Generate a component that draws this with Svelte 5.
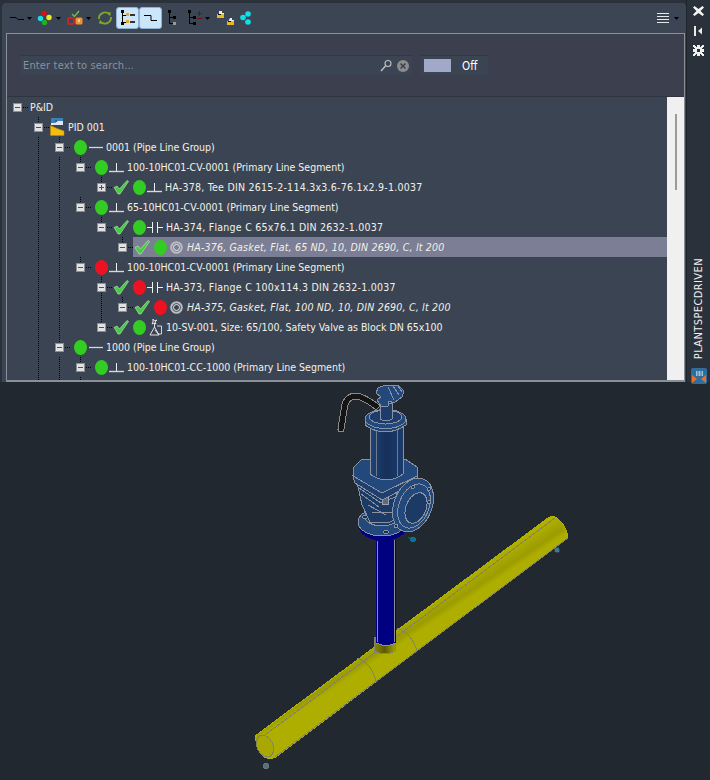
<script>
	// lines = indent columns that carry a dotted guide, up/down = guide through the expander
	const rows = [
		{ level: 0, text: 'P&ID', exp: 'minus', down: false },
		{ level: 1, lines: [], text: 'PID 001', exp: 'minus', kind: 'file' },
		{ level: 2, lines: [1], text: '0001 (Pipe Line Group)', exp: 'minus', status: 'green', kind: 'line' },
		{ level: 3, lines: [1, 2], text: '100-10HC01-CV-0001 (Primary Line Segment)', exp: 'minus', status: 'green', kind: 'tee' },
		{ level: 4, lines: [1, 2], up: true, text: 'HA-378, Tee DIN 2615-2-114.3x3.6-76.1x2.9-1.0037', exp: 'plus', check: true, status: 'green', kind: 'tee', wide: true },
		{ level: 3, lines: [1, 2], text: '65-10HC01-CV-0001 (Primary Line Segment)', exp: 'minus', status: 'green', kind: 'tee' },
		{ level: 4, lines: [1, 2], up: true, text: 'HA-374, Flange C 65x76.1 DIN 2632-1.0037', exp: 'minus', check: true, status: 'green', kind: 'flange', wide: true },
		{ level: 5, lines: [1, 2], up: true, text: 'HA-376, Gasket, Flat, 65 ND, 10, DIN 2690, C, lt 200', exp: 'minus', check: true, status: 'green', kind: 'gasket', italic: true, selected: true },
		{ level: 3, lines: [1, 2], text: '100-10HC01-CV-0001 (Primary Line Segment)', exp: 'minus', status: 'red', kind: 'tee' },
		{ level: 4, lines: [1, 2], up: true, down: true, text: 'HA-373, Flange C 100x114.3 DIN 2632-1.0037', exp: 'minus', check: true, status: 'red', kind: 'flange', wide: true },
		{ level: 5, lines: [1, 2, 4], up: true, text: 'HA-375, Gasket, Flat, 100 ND, 10, DIN 2690, C, lt 200', exp: 'minus', check: true, status: 'red', kind: 'gasket', italic: true },
		{ level: 4, lines: [1, 2], up: true, text: '10-SV-001, Size: 65/100, Safety Valve as Block DN 65x100', exp: 'minus', check: true, status: 'green', kind: 'valve' },
		{ level: 2, lines: [1], up: true, text: '1000 (Pipe Line Group)', exp: 'minus', status: 'green', kind: 'line' },
		{ level: 3, lines: [1, 2], text: '100-10HC01-CC-1000 (Primary Line Segment)', exp: 'minus', status: 'green', kind: 'tee' },
		{ level: 4, lines: [1, 2, 3], text: '', status: 'green', clipped: true }
	];

	function columns(row) {
		return Array.from({ length: row.level }, (_, i) => (row.lines ?? []).includes(i));
	}
</script>

{#snippet caret()}
	<svg class="caret" width="5" height="3" viewBox="0 0 5 3"><path d="M0 0h5L2.5 3z" fill="#000" /></svg>
{/snippet}

{#snippet kindIcon(kind)}
	{#if kind === 'file'}
		<svg width="15" height="18" viewBox="0 0 15 18" class="kind">
			<path d="M1 0h12v7H1z" fill="#3f7fb8" />
			<path d="M1 5h4l3-2h5v4H1z" fill="#dfe8f0" />
			<path d="M5 2h2v2H5z" fill="#2a5f90" />
			<path d="M.5 7.500L7 10.500l7 2.500v4.500H.5z" fill="#f2bd10" stroke="#b98a00" stroke-width=".6" />
		</svg>
	{:else if kind === 'line'}
		<svg width="15" height="9" viewBox="0 0 15 9" class="kind"><path d="M1 4.500h14" stroke="#d8d8d8" stroke-width="1.300" /></svg>
	{:else if kind === 'tee'}
		<svg width="15" height="11" viewBox="0 0 15 11" class="kind">
			<path d="M0 9.500h15" stroke="#d8d8d8" stroke-width="1.400" /><path d="M7.500 1v8" stroke="#f0f0f0" />
		</svg>
	{:else if kind === 'flange'}
		<svg width="16" height="13" viewBox="0 0 16 13" class="kind">
			<path d="M0 6.500h5M11 6.500h5M5.500 1v11M10.500 1v11" stroke="#f0f0f0" fill="none" />
		</svg>
	{:else if kind === 'gasket'}
		<svg width="13" height="13" viewBox="0 0 13 13" class="kind gasket">
			<circle cx="6.500" cy="6.500" r="5.300" fill="none" stroke="#bcbcbc" stroke-width="2" />
			<circle cx="6.500" cy="6.500" r="3" fill="none" stroke="#ececec" />
		</svg>
	{:else if kind === 'valve'}
		<svg width="14" height="17" viewBox="0 0 14 17" class="kind valve">
			<path d="M4 0l1.500 2L8 1 6 3l1 2-2-1-2 1 1-2zM5.500 4v4M1 16l4.500-8 4.500 8zM6 11l4 5" stroke="#f0f0f0" stroke-width=".9" fill="none" />
			<path d="M8 7h4.500v8H10" stroke="#d8d8d8" fill="none" />
		</svg>
	{/if}
{/snippet}

<div class="app">
	<section class="palette">
		<div class="main">
			<div class="toolbar">
				<button class="tool w24">
					<svg width="14" height="7" viewBox="0 0 14 7"><path d="M0 2.500h6l2 2h6" stroke="#000" fill="none" /></svg>
					{@render caret()}
				</button>
				<button class="tool w30">
					<svg width="16" height="16" viewBox="0 0 16 16">
						<circle cx="7" cy="3.500" r="2.700" fill="#e01010" /><circle cx="3.500" cy="8.500" r="2.700" fill="#10e0e8" />
						<circle cx="12" cy="7.500" r="2.700" fill="#f0e818" /><circle cx="7.500" cy="12.500" r="2.700" fill="#20b020" />
					</svg>
					{@render caret()}
				</button>
				<button class="tool w30">
					<svg width="16" height="16" viewBox="0 0 16 16">
						<path d="M5 4l2.500 2.500L12 1" stroke="#6cc04a" stroke-width="1.400" fill="none" />
						<rect x="1" y="8" width="6" height="6" rx="1" fill="#3c4654" stroke="#e02020" stroke-width="1.600" />
						<rect x="8.500" y="7.500" width="7" height="7" rx="1.500" fill="#f09030" /><path d="M12 9v3" stroke="#fff" />
					</svg>
					{@render caret()}
				</button>
				<button class="tool refresh">
					<svg width="16" height="16" viewBox="0 0 16 16">
						<path d="M2 9a6 6 0 0 1 10-5M14 7a6 6 0 0 1-10 5" stroke="#7ea82a" stroke-width="1.800" fill="none" />
						<path d="M10 2l4 .5-1 4zM6 14l-4-.5 1-4z" fill="#7ea82a" />
					</svg>
				</button>
				<button class="tool pressed">
					<svg width="16" height="16" viewBox="0 0 16 16">
						<path d="M1 0h3v3H1zM1 12h3v3H1z" fill="#000" /><path d="M2.500 3v10M2.500 5.500H7M2.500 12.500H7" stroke="#000" fill="none" />
						<path d="M6 3h3v3H6zM6 10h3v3H6z" fill="#e8a820" /><path d="M10 4h5v2h-5zM10 11h5v2h-5z" fill="#333" />
					</svg>
				</button>
				<button class="tool pressed next">
					<svg width="14" height="7" viewBox="0 0 14 7"><path d="M0 .5h7v5h6" stroke="#000" fill="none" /></svg>
				</button>
				<button class="tool tree3">
					<svg width="9" height="16" viewBox="0 0 9 16">
						<path d="M0 0h3v3H0z" fill="#000" /><path d="M1.500 3v11M1.500 7.500H5M1.500 13.500H5" stroke="#000" fill="none" />
						<path d="M5 6h3v3H5z" fill="#000" /><path d="M5 12h3v3H5z" fill="#999" />
					</svg>
				</button>
				<button class="tool tree4">
					<svg width="14" height="16" viewBox="0 0 14 16">
						<path d="M0 0h3v3H0z" fill="#000" /><path d="M1.500 3v11M1.500 7.500H5M1.500 13.500H5" stroke="#000" fill="none" />
						<path d="M5 6h3v3H5zM5 12h3v3H5z" fill="#000" />
						<path d="M9 3.500h5M11.500 1v5M9 8.500h5" stroke="#7a0c0c" fill="none" />
					</svg>
					{@render caret()}
				</button>
				<button class="tool pair">
					<svg width="17" height="14" viewBox="0 0 17 14">
						<path d="M2 0h3v2h2v2H2z" fill="#e8eef4" /><path d="M0 3h7v4H0z" fill="#e8b820" /><path d="M1 3h3v1H1z" fill="#111" />
						<path d="M8 6l2 2" stroke="#1e4f90" />
						<path d="M13 7h2v2h2v2h-6z" fill="#e8eef4" /><path d="M10 10h7v4h-7z" fill="#e8b820" /><path d="M11 10h3v1h-3z" fill="#111" />
					</svg>
				</button>
				<button class="tool dots">
					<svg width="12" height="14" viewBox="0 0 12 14">
						<circle cx="8" cy="3" r="2.800" fill="#10e0e8" /><circle cx="3" cy="6.500" r="2.800" fill="#10e0e8" /><circle cx="8" cy="11" r="2.800" fill="#10e0e8" />
					</svg>
				</button>
				<button class="tool menu">
					<svg width="12" height="10" viewBox="0 0 12 10"><path d="M0 .5h12M0 3.500h12M0 6.500h12M0 9.500h12" stroke="#e8e8e8" fill="none" /></svg>
					{@render caret()}
				</button>
			</div>

			<div class="box">
				<div class="search-area">
					<div class="search">
						<span class="placeholder">Enter text to search...</span>
						<svg width="12" height="13" viewBox="0 0 12 13">
							<circle cx="8" cy="4.500" r="3" fill="none" stroke="#c0c0c0" stroke-width="1.100" /><path d="M5.500 7L1 12" stroke="#c0c0c0" stroke-width="1.400" />
						</svg>
						<svg class="clear" width="12" height="12" viewBox="0 0 12 12">
							<circle cx="6" cy="6" r="6" fill="#8c8c8c" /><path d="M3.500 3.500l5 5M8.500 3.500l-5 5" stroke="#3c3f4e" stroke-width="1.500" />
						</svg>
					</div>
					<div class="toggle"><span class="swatch"></span><span class="off">Off</span></div>
				</div>

				<div class="tree-area">
					<div class="tree">
						{#each rows as row}
							<div class="row">
								{#each columns(row) as hasLine}
									<span class="col" class:line={hasLine}></span>
								{/each}
								<span class="col" class:up={row.up || row.level > 0} class:down={row.down} class:branch={row.exp}>
									{#if row.exp}
										<span class="exp"><i class="bar"></i>{#if row.exp === 'plus'}<i class="stem"></i>{/if}</span>
									{/if}
								</span>
								<div class="content" class:selected={row.selected}>
									{#if row.check}
										<svg class="check" width="16" height="16" viewBox="0 0 16 16">
											<path d="M1 8.500L4 7l2.500 3L14 1.500l1.500 1L7 15H5z" fill="#44cc44" stroke="#c4f0b4" stroke-width=".6" />
										</svg>
									{/if}
									{#if row.status}<span class="dot {row.status}" class:clipped={row.clipped}></span>{/if}
									{#if row.kind}{@render kindIcon(row.kind)}{/if}
									<span class="label" class:italic={row.italic} class:wide={row.wide} class:top={row.level === 0}>{row.text}</span>
								</div>
							</div>
						{/each}
					</div>
					<div class="scrollbar"><span class="thumb"></span></div>
				</div>
			</div>
		</div>

		<aside class="rail">
			<svg class="rail-icon" width="11" height="10" viewBox="0 0 11 10"><path d="M0 1.500L1.500 0l4 3 4-3L11 1.500 7.500 5 11 8.500 9.500 10l-4-3-4 3L0 8.500 3.500 5z" fill="#f4f4f4" /></svg>
			<svg class="rail-icon pin" width="9" height="10" viewBox="0 0 9 10"><path d="M0 0h2v10H0z" fill="#e8e8e8" /><path d="M8 1.500v7L4 5z" fill="#e8e8e8" /></svg>
			<svg class="rail-icon gear" width="11" height="11" viewBox="0 0 11 11">
				<path d="M0 0h2v1h1v1h1V0h3v2h1V1h1V0h2v2h-1v1H9v1h2v3H9v1h1v1h1v2H9v-1H8V9H7v2H4V9H3v1H2v1H0V9h1V8h1V7H0V4h2V3H1V2H0z" fill="#f0f0f0" />
				<path d="M4 4h3v3H4z" fill="#2b313b" />
			</svg>
			<span class="rail-title">PLANTSPECDRIVEN</span>
			<svg class="rail-logo" width="16" height="16" viewBox="0 0 16 16">
				<rect width="16" height="16" rx="2" fill="#2f6d9c" />
				<path d="M5 3h7v5H5z" fill="#a8c0d4" /><path d="M7 3v5M10 3v5" stroke="#2f6d9c" />
				<path d="M1 7l5 4-5 4zM15 7l-5 4 5 4z" fill="#e8702a" />
			</svg>
		</aside>
	</section>

	<svg class="scene" width="710" height="398" viewBox="0 382 710 398" shape-rendering="crispEdges">
		<defs>
			<linearGradient id="pipe" gradientUnits="userSpaceOnUse" x1="400" y1="610" x2="416" y2="634">
				<stop offset="0" stop-color="#b8b800" />
				<stop offset=".45" stop-color="#aaaa00" />
				<stop offset=".8" stop-color="#9c9c00" />
				<stop offset="1" stop-color="#aeae00" />
			</linearGradient>
			<linearGradient id="bonnet" x1="0" x2="1" y1="0" y2="0">
				<stop offset="0" stop-color="#1f4478" />
				<stop offset=".5" stop-color="#16305a" />
				<stop offset="1" stop-color="#1c3c6c" />
			</linearGradient>
			<linearGradient id="cup" x1="0" x2="1" y1="0" y2="0">
				<stop offset="0" stop-color="#8c8c00" />
				<stop offset=".5" stop-color="#5a5a00" />
				<stop offset="1" stop-color="#a0a000" />
			</linearGradient>
		</defs>

		<!-- pipe run -->
		<path d="M255 736L548 518Q553 515 557 518Q566 525 568 537L276 757Q270 760 264 757Q257 748 255 736z" fill="url(#pipe)" stroke="#b0b000" stroke-width="1" />
		<path d="M265 735L555 518" stroke="#85855a" fill="none" />
		<path d="M275 757L568 538" stroke="#85855a" fill="none" />
		<ellipse cx="265" cy="746" rx="8" ry="11.500" transform="rotate(-25 265 746)" fill="#a8a800" stroke="#85855a" />
		<path d="M357 658Q372 663 376 682" stroke="#85855a" fill="none" />
		<path d="M397 628Q413 634 417 652" stroke="#85855a" fill="none" />
		<circle cx="376" cy="681" r=".6" fill="#fff" /><circle cx="417" cy="651" r=".6" fill="#fff" />

		<!-- stem into the tee -->
		<path d="M374 637h21v14q-10 6-21 0z" fill="url(#cup)" stroke="#85856a" />
		<path d="M376 540h20v103q-10 6-20 0z" fill="#000080" />
		<path d="M377 540v102M394 540v102M376 643q10 5 20 0" stroke="#8a8fa0" fill="none" />

		<!-- safety valve: lower flange and body -->
		<ellipse cx="383" cy="526" rx="24" ry="15" fill="#000080" />
		<ellipse cx="382" cy="522" rx="24" ry="14" fill="#23487c" stroke="#8a92a0" />
		<ellipse cx="382" cy="517" rx="17" ry="9" fill="#1c3a66" stroke="#8a92a0" />
		<ellipse cx="365" cy="517" rx="2.500" ry="1.500" fill="#16305a" stroke="#8a92a0" />
		<ellipse cx="386" cy="532" rx="2.500" ry="1.500" fill="#16305a" stroke="#8a92a0" />
		<path d="M357 482L382 499L404 490V516L390 522H370L362 505z" fill="#1c3a66" stroke="#8a92a0" />
		<path d="M359 488L381 503L402 494M361 494L379 507M372 512L394 512M368 505L386 515" stroke="#8a92a0" fill="none" />
		<path d="M382 497h6v7h-6z" fill="#5a6a80" stroke="#9aa2b0" />
		<circle cx="362" cy="490" r=".6" fill="#fff" /><circle cx="366" cy="496" r=".6" fill="#fff" /><circle cx="372" cy="501" r=".6" fill="#fff" />

		<!-- base plate -->
		<path d="M353 476L382 493L417 476V482L382 500L355 483z" fill="#1e3f70" stroke="#8a92a0" />
		<path d="M353 468L362 459H405L417 467V476L382 493L353 476z" fill="#23487c" stroke="#8a92a0" />

		<!-- bonnet -->
		<path d="M370 424h33v50q-16 12-33 0z" fill="url(#bonnet)" stroke="#8a92a0" />
		<path d="M376 430v46M397 430v46" stroke="#6f7a8c" fill="none" />
		<path d="M365 419v6q20 14 41 0v-6z" fill="#1f4478" stroke="#8a92a0" />
		<ellipse cx="385.500" cy="419" rx="20.500" ry="9.500" fill="#23487c" stroke="#8a92a0" />
		<ellipse cx="385.500" cy="417" rx="16" ry="7" fill="#1c3c6c" stroke="#8a92a0" />

		<!-- side flange -->
		<ellipse cx="413" cy="505" rx="19" ry="28" transform="rotate(22 413 505)" fill="#23487c" stroke="#8a92a0" />
		<ellipse cx="414" cy="506" rx="15" ry="23" transform="rotate(22 414 506)" fill="none" stroke="#8a92a0" />
		<ellipse cx="416" cy="508" rx="10" ry="16" transform="rotate(22 416 508)" fill="#1c3a66" stroke="#8a92a0" />
		<circle cx="413" cy="487" r="1.500" fill="#16305a" stroke="#8a92a0" />
		<circle cx="429" cy="489" r="1.500" fill="#16305a" stroke="#8a92a0" />
		<circle cx="429" cy="502" r="1.500" fill="#16305a" stroke="#8a92a0" />
		<circle cx="396" cy="526" r="1.500" fill="#16305a" stroke="#8a92a0" />
		<circle cx="412" cy="497" r=".6" fill="#fff" /><circle cx="404" cy="495" r=".6" fill="#fff" />

		<!-- cap and lever -->
		<path d="M380 403h12v16q-6 4-12 0z" fill="#1c3c6c" stroke="#8a92a0" />
		<path d="M378 388l7-3 13 0 6 6-2 6-8 6-5-2-1 5-7 0-4-6 4-3-5-4z" fill="#23487c" stroke="#8a92a0" />
		<path d="M388 387l6 13M393 386l6 9M398 386l4 6" stroke="#8a92a0" fill="none" />
		<circle cx="380" cy="400" r=".6" fill="#fff" /><circle cx="393" cy="413" r=".6" fill="#fff" /><circle cx="378" cy="418" r=".6" fill="#fff" />

		<!-- vent pipe -->
		<path d="M341 429Q343 416 345 404Q348 396 356 396Q364 397 376 406" fill="none" stroke="#8a8a8a" stroke-width="7" stroke-linecap="round" />
		<path d="M341 429Q343 416 345 404Q348 396 356 396Q364 397 376 406" fill="none" stroke="#141414" stroke-width="5" stroke-linecap="round" />

		<!-- port markers -->
		<path d="M408 537l4 3" stroke="#a02020" />
		<circle cx="413" cy="539.500" r="3" fill="#0c6f96" />
		<circle cx="557" cy="550" r="2.500" fill="#3a7f96" stroke="#556" stroke-width=".5" />
		<circle cx="266" cy="766" r="3" fill="#5a7078" stroke="#777" stroke-width=".5" />
	</svg>
</div>

<style>
	:global(body) {
		margin: 0;
		background: #212830;
	}

	.app {
		width: 710px;
		height: 780px;
		overflow: hidden;
		display: flex;
		flex-direction: column;
		background: #212830;
		font-family: "DejaVu Sans", "Liberation Sans", sans-serif;
		font-stretch: condensed;
		font-size: 10.500px;
		color: #f2f2ea;
	}

	.palette {
		height: 382px;
		flex: none;
		display: flex;
		background: #2b313b;
	}

	.main {
		width: 684px;
		margin: 3px 0 0 2px;
		padding: 0 1px 0 4px;
		box-sizing: border-box;
		display: flex;
		flex-direction: column;
		background: #3b4554;
		border-radius: 4px 4px 0 0;
	}

	.toolbar {
		height: 30px;
		flex: none;
		display: flex;
		align-items: center;
		padding-left: 4px;
	}

	.tool {
		all: unset;
		flex: none;
		height: 22px;
		display: flex;
		align-items: center;
		gap: 3px;
		box-sizing: border-box;
	}

	.caret {
		flex: none;
	}

	.w24 { width: 27px; }
	.w30 { width: 30px; }
	.refresh { width: 19px; }

	.pressed {
		width: 23px;
		justify-content: center;
		background: #cbe6fb;
		border: 1px solid #8db3d4;
		border-radius: 3px;
	}

	.next { margin-right: 6px; }
	.tree3 { width: 20px; }
	.tree4 { width: 29px; }
	.pair { width: 23px; }
	.dots { width: 14px; }
	.menu { margin-left: auto; margin-right: 6px; gap: 5px; }

	.box {
		flex: 1;
		min-height: 0;
		display: flex;
		flex-direction: column;
		border: 1px solid #8a8f98;
		border-bottom-width: 2px;
		background: #3c3f4e;
	}

	.search-area {
		height: 63px;
		flex: none;
		display: flex;
		align-items: center;
		gap: 9px;
		padding-left: 14px;
		box-sizing: border-box;
		border-bottom: 1px solid #30343f;
	}

	.search {
		width: 391px;
		height: 20px;
		display: flex;
		align-items: center;
		box-sizing: border-box;
		padding: 0 3px 0 2px;
		gap: 5px;
		background: #3b4453;
		border-top: 1px solid #333845;
	}

	.placeholder {
		flex: 1;
		font-size: 11px;
		letter-spacing: .15px;
		color: #8b909e;
	}

	.toggle {
		width: 67px;
		height: 20px;
		display: flex;
		align-items: center;
		box-sizing: border-box;
		padding-left: 3px;
		background: #3b4453;
		border-top: 1px solid #333845;
	}

	.swatch {
		width: 27px;
		height: 13px;
		background: #a2a8c8;
	}

	.off {
		margin-left: 11px;
		font-size: 11.500px;
		color: #fff;
	}

	.tree-area {
		flex: 1;
		min-height: 0;
		display: flex;
		overflow: hidden;
		background: #3b4453;
	}

	.tree {
		flex: 1;
		min-width: 0;
		overflow: hidden;
	}

	.row {
		height: 20px;
		display: flex;
	}

	.col {
		width: 21px;
		height: 20px;
		flex: none;
		display: flex;
		align-items: center;
		justify-content: center;
		--dots: repeating-linear-gradient(to bottom, #000 0 1px, transparent 1px 2px);
		--hdots: repeating-linear-gradient(to right, #000 0 1px, transparent 1px 2px);
	}

	.line {
		background: var(--dots) center / 1px 100% no-repeat;
	}

	.branch {
		background: var(--hdots) right 0 center / 7px 1px no-repeat;
	}

	.branch.up {
		background:
			var(--hdots) right 0 center / 7px 1px no-repeat,
			var(--dots) center top / 1px 50% no-repeat;
	}

	.branch.up.down {
		background:
			var(--hdots) right 0 center / 7px 1px no-repeat,
			var(--dots) center / 1px 100% no-repeat;
	}

	.exp {
		width: 9px;
		height: 9px;
		display: grid;
		place-items: center;
		box-sizing: border-box;
		background: #e2e2e2;
		border: 1px solid #8b8f96;
	}

	.exp i {
		grid-area: 1 / 1;
		background: #2d4fa8;
	}

	.bar {
		width: 5px;
		height: 1px;
	}

	.stem {
		width: 1px;
		height: 5px;
	}

	.content {
		flex: 1;
		min-width: 0;
		display: flex;
		align-items: center;
	}

	.selected {
		background: #7b7e94;
	}

	.check {
		margin-left: 1px;
		flex: none;
	}

	.dot {
		width: 13px;
		height: 15px;
		flex: none;
		margin-left: 4px;
		border-radius: 50%;
	}

	.green { background: #33cc22; }
	.red { background: #ee1122; }
	.clipped { margin-left: 10px; }

	.kind {
		flex: none;
		margin-left: 1px;
	}

	.gasket { margin-left: 3px; }
	.valve { margin-left: 3px; }

	.label {
		margin-left: 3px;
		white-space: nowrap;
	}

	.top { margin-left: 2px; }
	.wide { letter-spacing: .25px; }
	.italic { font-style: italic; margin-left: 4px; letter-spacing: .2px; }

	.scrollbar {
		width: 17px;
		flex: none;
		padding: 17px 0 0 8px;
		box-sizing: border-box;
		background: #f0f0f0;
	}

	.thumb {
		display: block;
		width: 2px;
		height: 76px;
		background: #9a9a9a;
	}

	.rail {
		flex: 1;
		display: flex;
		flex-direction: column;
		align-items: center;
		padding-top: 6px;
		border-left: 1px solid #1f252d;
	}

	.rail-icon { flex: none; }
	.pin { margin-top: 10px; }
	.gear { margin-top: 9px; }

	.rail-title {
		margin-top: auto;
		writing-mode: vertical-rl;
		transform: rotate(180deg);
		font-size: 11px;
		letter-spacing: .4px;
		color: #f0f0f0;
		line-height: 14px;
	}

	.rail-logo {
		flex: none;
		margin: 9px 0 -2px;
		position: relative;
	}

	.scene {
		flex: none;
		display: block;
	}
</style>
